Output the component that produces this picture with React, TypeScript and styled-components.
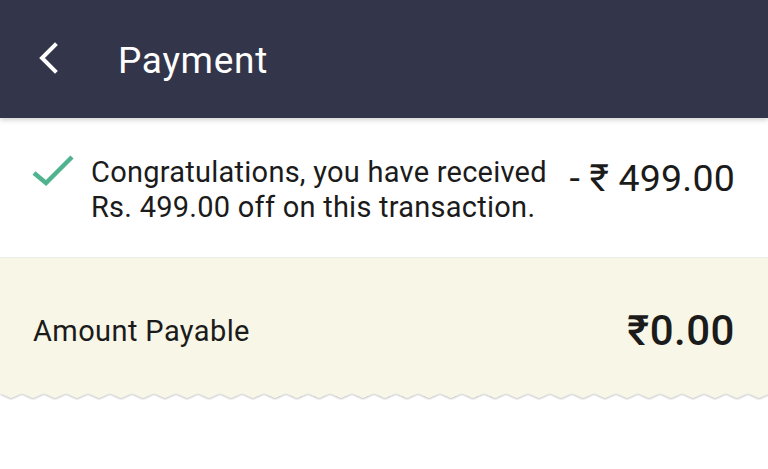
import React from "react";
import styled, { createGlobalStyle } from "styled-components";

const Global = createGlobalStyle`
  html, body { margin: 0; padding: 0; background: #ffffff; }
  body { font-family: Roboto, "Noto Sans", "Liberation Sans", sans-serif; color: #1b1b1b; }
`;

const Page = styled.div`
  width: 768px;
  min-height: 469px;
  display: flex;
  flex-direction: column;
  background: #fff;
`;

const Header = styled.header`
  position: relative;
  height: 118px;
  background: #33364a;
  display: flex;
  align-items: center;
  padding-left: 36px;
  box-sizing: border-box;
  box-shadow: 0 2px 5px rgba(0, 0, 0, 0.18);
  z-index: 1;
`;

const BackButton = styled.button`
  border: 0;
  background: transparent;
  padding: 0;
  width: 24px;
  height: 34px;
  display: flex;
  align-items: center;
  justify-content: center;
  margin-top: -2px;
  cursor: pointer;
`;

const Title = styled.h1`
  margin: 2px 0 0 58px;
  font-size: 37px;
  font-weight: 400;
  color: #ffffff;
  letter-spacing: 0.7px;
`;

const DiscountRow = styled.div`
  display: flex;
  align-items: flex-start;
  padding: 37px 33px 0 31px;
  height: 140px;
  box-sizing: border-box;
  border-bottom: 1px solid #ececec;
`;

const CheckIcon = styled.svg`
  flex: none;
  width: 46px;
  height: 36px;
  margin-top: -2px;
`;

const Message = styled.p`
  margin: 0 0 0 14px;
  font-size: 29px;
  line-height: 35px;
  letter-spacing: 0.25px;
  flex: 1;
`;

const Discount = styled.div`
  font-size: 37.5px;
  line-height: 44px;
  letter-spacing: 0.2px;
  white-space: nowrap;
  margin-top: 1px;
`;

const Summary = styled.div`
  position: relative;
  display: flex;
  flex-direction: column;
`;

const SummaryBody = styled.div`
  background: #f8f6e6;
  height: 134px;
  display: flex;
  align-items: center;
  justify-content: space-between;
  padding: 0 33px;
  box-sizing: border-box;
`;

const Label = styled.span`
  font-size: 29px;
  letter-spacing: 0.4px;
  margin-top: 12px;
`;

const Total = styled.span`
  font-size: 42px;
  font-weight: 500;
  letter-spacing: 0.5px;
  margin-top: 10px;
`;

const Edge = styled.svg`
  display: block;
  width: 768px;
  height: 12px;
`;

function zigzag(width: number, period: number, top: number, amp: number) {
  let d = `M0 0 L0 ${top}`;
  for (let x = 0; x <= width + period; x += period) {
    d += ` L${x + period / 2} ${top + amp} L${x + period} ${top}`;
  }
  d += ` L${width + period} 0 Z`;
  return d;
}

export default function App() {
  const edgePath = zigzag(768, 22, 1, 5);
  return (
    <Page>
      <Global />
      <Header>
        <BackButton aria-label="Back">
          <svg width="22" height="34" viewBox="0 0 22 34">
            <path d="M18 4 L5 17 L18 30" fill="none" stroke="#ffffff" strokeWidth="4" strokeLinecap="square" />
          </svg>
        </BackButton>
        <Title>Payment</Title>
      </Header>
      <DiscountRow>
        <CheckIcon viewBox="0 0 46 36">
          <path d="M3 20 L15 30 L41 4" fill="none" stroke="#4fb38f" strokeWidth="4.5" strokeLinecap="butt" />
        </CheckIcon>
        <Message>
          Congratulations, you have received
          <br />
          Rs. 499.00 off on this transaction.
        </Message>
        <Discount>- ₹ 499.00</Discount>
      </DiscountRow>
      <Summary>
        <SummaryBody>
          <Label>Amount Payable</Label>
          <Total>₹0.00</Total>
        </SummaryBody>
        <Edge viewBox="0 0 768 12" preserveAspectRatio="none">
          <defs>
            <filter id="edgeShadow" x="-5%" y="-50%" width="110%" height="200%">
              <feGaussianBlur in="SourceAlpha" stdDeviation="1" />
              <feOffset dy="1" result="b" />
              <feComponentTransfer>
                <feFuncA type="linear" slope="0.3" />
              </feComponentTransfer>
              <feMerge>
                <feMergeNode />
                <feMergeNode in="SourceGraphic" />
              </feMerge>
            </filter>
          </defs>
          <path d={edgePath} fill="#f8f6e6" filter="url(#edgeShadow)" />
        </Edge>
      </Summary>
    </Page>
  );
}
